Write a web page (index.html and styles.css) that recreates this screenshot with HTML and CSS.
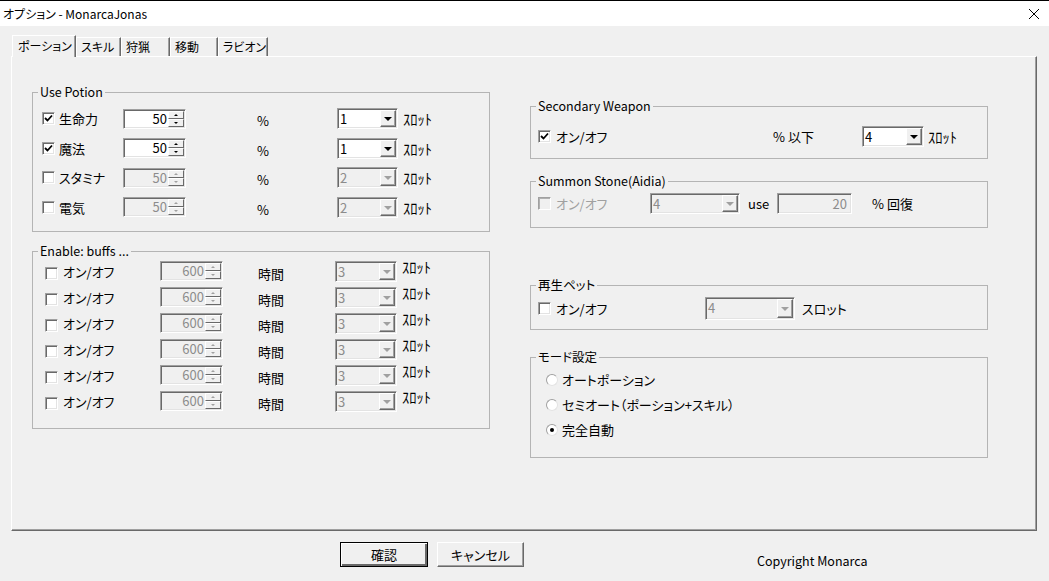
FILE: index.html
```html
<!DOCTYPE html>
<html lang="ja">
<head>
  <meta charset="UTF-8">
  <title>オプション - MonarcaJonas</title>
  <link rel="stylesheet" href="styles.css">
</head>
<body>
  <div class="window">
    <div class="titlebar">
      <span class="title">オプション - MonarcaJonas</span>
      <svg class="close" width="12" height="12" viewBox="0 0 12 12">
        <path d="M1 1 L11 11 M11 1 L1 11" stroke="#000" stroke-width="1" fill="none"/>
      </svg>
    </div>

    <div class="client">
      <!-- tab strip -->
      <div class="tabs">
        <div class="tab active">ポーション</div>
        <div class="tab">スキル</div>
        <div class="tab">狩猟</div>
        <div class="tab">移動</div>
        <div class="tab">ラビオン</div>
      </div>

      <div class="panel">
        <div class="col">
          <fieldset class="group potion">
            <legend>Use Potion</legend>
            <div class="prow">
              <span class="cb checked"><svg viewBox="0 0 11 11"><path d="M2 5 L4.5 7.5 L9 2.5"/></svg></span>
              <span class="name">生命力</span>
              <div class="spin"><span class="val">50</span><span class="ud"><i class="up"></i><i class="down"></i></span></div>
              <span class="pct">%</span>
              <div class="combo"><span class="val">1</span><span class="dd"></span></div>
              <span class="slot">ｽﾛｯﾄ</span>
            </div>
            <div class="prow">
              <span class="cb checked"><svg viewBox="0 0 11 11"><path d="M2 5 L4.5 7.5 L9 2.5"/></svg></span>
              <span class="name">魔法</span>
              <div class="spin"><span class="val">50</span><span class="ud"><i class="up"></i><i class="down"></i></span></div>
              <span class="pct">%</span>
              <div class="combo"><span class="val">1</span><span class="dd"></span></div>
              <span class="slot">ｽﾛｯﾄ</span>
            </div>
            <div class="prow">
              <span class="cb"></span>
              <span class="name">スタミナ</span>
              <div class="spin off"><span class="val">50</span><span class="ud"><i class="up"></i><i class="down"></i></span></div>
              <span class="pct">%</span>
              <div class="combo off"><span class="val">2</span><span class="dd"></span></div>
              <span class="slot">ｽﾛｯﾄ</span>
            </div>
            <div class="prow">
              <span class="cb"></span>
              <span class="name">電気</span>
              <div class="spin off"><span class="val">50</span><span class="ud"><i class="up"></i><i class="down"></i></span></div>
              <span class="pct">%</span>
              <div class="combo off"><span class="val">2</span><span class="dd"></span></div>
              <span class="slot">ｽﾛｯﾄ</span>
            </div>
          </fieldset>

          <fieldset class="group buffs">
            <legend>Enable: buffs ...</legend>
            <div class="brow">
              <span class="cb"></span><span class="name">オン/オフ</span>
              <div class="spin off"><span class="val">600</span><span class="ud"><i class="up"></i><i class="down"></i></span></div>
              <span class="hr">時間</span>
              <div class="combo off"><span class="val">3</span><span class="dd"></span></div>
              <span class="slot">ｽﾛｯﾄ</span>
            </div>
            <div class="brow">
              <span class="cb"></span><span class="name">オン/オフ</span>
              <div class="spin off"><span class="val">600</span><span class="ud"><i class="up"></i><i class="down"></i></span></div>
              <span class="hr">時間</span>
              <div class="combo off"><span class="val">3</span><span class="dd"></span></div>
              <span class="slot">ｽﾛｯﾄ</span>
            </div>
            <div class="brow">
              <span class="cb"></span><span class="name">オン/オフ</span>
              <div class="spin off"><span class="val">600</span><span class="ud"><i class="up"></i><i class="down"></i></span></div>
              <span class="hr">時間</span>
              <div class="combo off"><span class="val">3</span><span class="dd"></span></div>
              <span class="slot">ｽﾛｯﾄ</span>
            </div>
            <div class="brow">
              <span class="cb"></span><span class="name">オン/オフ</span>
              <div class="spin off"><span class="val">600</span><span class="ud"><i class="up"></i><i class="down"></i></span></div>
              <span class="hr">時間</span>
              <div class="combo off"><span class="val">3</span><span class="dd"></span></div>
              <span class="slot">ｽﾛｯﾄ</span>
            </div>
            <div class="brow">
              <span class="cb"></span><span class="name">オン/オフ</span>
              <div class="spin off"><span class="val">600</span><span class="ud"><i class="up"></i><i class="down"></i></span></div>
              <span class="hr">時間</span>
              <div class="combo off"><span class="val">3</span><span class="dd"></span></div>
              <span class="slot">ｽﾛｯﾄ</span>
            </div>
            <div class="brow">
              <span class="cb"></span><span class="name">オン/オフ</span>
              <div class="spin off"><span class="val">600</span><span class="ud"><i class="up"></i><i class="down"></i></span></div>
              <span class="hr">時間</span>
              <div class="combo off"><span class="val">3</span><span class="dd"></span></div>
              <span class="slot">ｽﾛｯﾄ</span>
            </div>
          </fieldset>
        </div>

        <div class="col">
          <fieldset class="group weapon">
            <legend>Secondary Weapon</legend>
            <div class="wrow">
              <span class="cb checked"><svg viewBox="0 0 11 11"><path d="M2 5 L4.5 7.5 L9 2.5"/></svg></span>
              <span class="name">オン/オフ</span>
              <span class="pct">% 以下</span>
              <div class="combo"><span class="val">4</span><span class="dd"></span></div>
              <span class="slot">ｽﾛｯﾄ</span>
            </div>
          </fieldset>

          <fieldset class="group summon">
            <legend>Summon Stone(Aidia)</legend>
            <div class="srow">
              <span class="cb off"></span>
              <span class="name gray">オン/オフ</span>
              <div class="combo off"><span class="val">4</span><span class="dd"></span></div>
              <span class="use">use</span>
              <div class="edit off">20</div>
              <span class="heal">% 回復</span>
            </div>
          </fieldset>

          <fieldset class="group pet">
            <legend>再生ペット</legend>
            <div class="trow">
              <span class="cb"></span>
              <span class="name">オン/オフ</span>
              <div class="combo off"><span class="val">4</span><span class="dd"></span></div>
              <span class="slot">スロット</span>
            </div>
          </fieldset>

          <fieldset class="group mode">
            <legend>モード設定</legend>
            <div class="mrow"><span class="radio"></span><span>オートポーション</span></div>
            <div class="mrow"><span class="radio"></span><span>セミオート（ポーション+スキル）</span></div>
            <div class="mrow"><span class="radio on"></span><span>完全自動</span></div>
          </fieldset>
        </div>
      </div>

      <div class="footer">
        <button class="btn default">確認</button>
        <button class="btn">キャンセル</button>
        <span class="copyright">Copyright Monarca</span>
      </div>
    </div>
  </div>
</body>
</html>
```

FILE: styles.css
```css
body {
  margin: 0;
  background: #f0f0f0;
  font-family: "Noto Sans CJK JP", "Noto Sans", sans-serif;
  font-size: 13px;
  font-feature-settings: "palt";
  color: #000;
}
.window {
  width: 1049px;
  height: 581px;
  overflow: hidden;
}
.titlebar {
  height: 25px;
  background: #fff;
  border-top: 1px solid #000;
  display: flex;
  align-items: center;
  justify-content: space-between;
  padding: 0 9px 0 3px;
}
.title {
  font-size: 12px;
}
.client {
  padding-top: 9px;
}

/* tabs */
.tabs {
  display: flex;
  align-items: flex-end;
  height: 21px;
  margin-left: 12px;
}
.tab {
  box-sizing: border-box;
  height: 19px;
  line-height: 17px;
  padding: 0 0 0 4px;
  font-size: 12px;
  border-top: 1px solid #fff;
  border-left: 1px solid #fff;
  border-right: 1px solid #696969;
  box-shadow: inset -1px 0 0 #a0a0a0;
  white-space: nowrap;
  overflow: hidden;
}
.tab:nth-child(1) { width: 64px; }
.tab:nth-child(2) { width: 45px; }
.tab:nth-child(3) { width: 49px; }
.tab:nth-child(4) { width: 48px; }
.tab:nth-child(5) { width: 50px; }
.tab.active {
  height: 22px;
  line-height: 20px;
  margin-bottom: -1px;
  padding-left: 5px;
  background: #f0f0f0;
  position: relative;
  z-index: 1;
}

.panel {
  box-sizing: border-box;
  width: 1026px;
  height: 475px;
  margin-left: 11px;
  border-top: 1px solid #fff;
  border-left: 1px solid #fff;
  border-right: 1px solid #696969;
  border-bottom: 1px solid #696969;
  box-shadow: inset -1px -1px 0 #a0a0a0;
  display: grid;
  grid-template-columns: 458px 458px;
  column-gap: 40px;
  align-items: start;
  padding: 28px 0 0 20px;
}
.col {
  display: flex;
  flex-direction: column;
}

/* group boxes */
.group {
  box-sizing: border-box;
  width: 458px;
  min-width: 0;
  margin: 0;
  padding: 0;
  border: 1px solid #b4b4b4;
}
.group legend {
  padding: 0 2px;
  margin-left: 5px;
  line-height: 14px;
  font-size: 12.5px;
}
.potion { height: 147px; padding-top: 5px; }
.buffs { height: 185px; margin-top: 12px; padding-top: 0; }
.weapon { height: 60px; margin-top: 14px; padding-top: 13px; }
.summon { height: 54px; margin-top: 15px; padding-top: 5px; }
.pet { height: 52px; margin-top: 50px; padding-top: 5px; }
.mode { height: 108px; margin-top: 20px; padding-top: 3px; }

/* common controls */
.cb {
  box-sizing: border-box;
  width: 13px;
  height: 13px;
  flex: none;
  background: #fff;
  border: 1px solid;
  border-color: #a0a0a0 #fff #fff #a0a0a0;
  box-shadow: inset 1px 1px 0 #696969, inset -1px -1px 0 #e3e3e3;
  display: flex;
}
.cb svg {
  width: 11px;
  height: 11px;
}
.cb svg path {
  fill: none;
  stroke: #000;
  stroke-width: 1.8;
}
.cb.off {
  background: #f0f0f0;
  box-shadow: inset 1px 1px 0 #b0b0b0;
}
.gray {
  color: #a0a0a0;
}

.spin, .combo, .edit {
  box-sizing: border-box;
  display: flex;
  flex: none;
  background: #fff;
  border: 1px solid;
  border-color: #a0a0a0 #fff #fff #a0a0a0;
  box-shadow: inset 1px 1px 0 #696969, inset -1px -1px 0 #e3e3e3;
}
.spin {
  width: 63px;
  height: 20px;
}
.spin .val {
  flex: 1;
  text-align: right;
  padding-right: 1px;
  line-height: 18px;
}
.ud {
  width: 16px;
  display: flex;
  flex-direction: column;
  padding: 1px 1px 1px 0;
}
.ud i {
  flex: 1;
  display: flex;
  align-items: center;
  justify-content: center;
  background: #f0f0f0;
  border: 1px solid;
  border-color: #fff #696969 #696969 #fff;
}
.ud i::after {
  content: "";
  border-left: 2px solid transparent;
  border-right: 2px solid transparent;
}
.ud .up::after { border-bottom: 2px solid #000; }
.ud .down::after { border-top: 2px solid #000; }

.combo {
  width: 61px;
  height: 21px;
}
.combo .val {
  flex: 1;
  padding-left: 2px;
  line-height: 19px;
}
.combo .dd {
  width: 16px;
  margin: 1px 1px 1px 0;
  box-sizing: border-box;
  background: #f0f0f0;
  border: 1px solid;
  border-color: #fff #696969 #696969 #fff;
  box-shadow: inset -1px -1px 0 #a0a0a0;
  display: flex;
  align-items: center;
  justify-content: center;
}
.combo .dd::after {
  content: "";
  border-left: 4px solid transparent;
  border-right: 4px solid transparent;
  border-top: 4px solid #000;
  margin-top: 1px;
}
.edit {
  width: 75px;
  height: 21px;
  justify-content: flex-end;
  padding-right: 4px;
  line-height: 19px;
}

.spin.off, .combo.off, .edit.off {
  background: #f0f0f0;
  color: #8c8c8c;
}
.spin.off .ud i::after { border-bottom-color: #a0a0a0; border-top-color: #a0a0a0; }
.spin.off .ud .up::after { border-top-color: transparent; }
.spin.off .ud .down::after { border-bottom-color: transparent; }
.combo.off .dd::after { border-top-color: #a0a0a0; }

.slot {
  font-size: 14.5px;
  font-feature-settings: normal;
}

/* Use Potion rows */
.prow {
  display: flex;
  align-items: center;
  height: 29.5px;
}
.prow .cb { margin-left: 9px; }
.prow .name { width: 64px; margin-left: 4px; }
.prow .pct {
  box-sizing: border-box;
  width: 151px;
  padding: 4px 0 0 71px;
}
.prow .slot { margin-left: 5px; }

/* buff rows */
.brow {
  display: flex;
  align-items: center;
  height: 26px;
}
.brow .cb { margin-left: 12px; margin-top: 4px; }
.brow .name { width: 97px; margin-left: 5px; }
.brow .hr {
  box-sizing: border-box;
  width: 112px;
  padding: 4px 0 0 35px;
}
.brow .combo { width: 62px; }
.brow .slot { margin-left: 5px; align-self: flex-start; margin-top: -2px; }

/* right column rows */
.wrow, .srow, .trow {
  display: flex;
  align-items: center;
}
.wrow .cb, .srow .cb, .trow .cb { margin-left: 7px; }
.wrow .name { width: 217px; margin-left: 5px; }
.wrow .pct { width: 89px; }
.wrow .combo { width: 62px; }
.wrow .slot { margin-left: 4px; }

.srow .name { width: 94px; margin-left: 5px; }
.srow .combo { width: 90px; }
.srow .use { width: 29px; margin-left: 8px; }
.srow .heal { margin-left: 20px; }

.trow { height: 23px; }
.trow .name { width: 149px; margin-left: 5px; }
.trow .combo { width: 90px; height: 23px; }
.trow .slot { margin-left: 7px; font-size: 13px; font-feature-settings: "palt"; }

.mrow {
  display: flex;
  align-items: center;
  height: 25px;
}
.radio {
  box-sizing: border-box;
  width: 12px;
  height: 12px;
  margin: 0 4px 0 15px;
  border-radius: 50%;
  background: #fff;
  border: 1px solid;
  border-color: #a0a0a0 #e3e3e3 #e3e3e3 #a0a0a0;
  display: flex;
  align-items: center;
  justify-content: center;
}
.radio.on::after {
  content: "";
  width: 4px;
  height: 4px;
  border-radius: 50%;
  background: #000;
}

/* footer */
.footer {
  display: flex;
  align-items: flex-start;
  padding: 11px 0 0 340px;
}
.btn {
  box-sizing: border-box;
  width: 87px;
  height: 25px;
  padding: 0;
  font: inherit;
  background: #f0f0f0;
  border: 1px solid;
  border-color: #fff #696969 #696969 #fff;
  box-shadow: inset -1px -1px 0 #a0a0a0;
}
.btn.default {
  width: 88px;
  border: 1px solid #000;
  box-shadow: inset 1px 1px 0 #fff, inset -2px -2px 0 #696969;
  margin-right: 9px;
}
.copyright {
  margin: 9px 0 0 233px;
  font-size: 12.5px;
}
```
